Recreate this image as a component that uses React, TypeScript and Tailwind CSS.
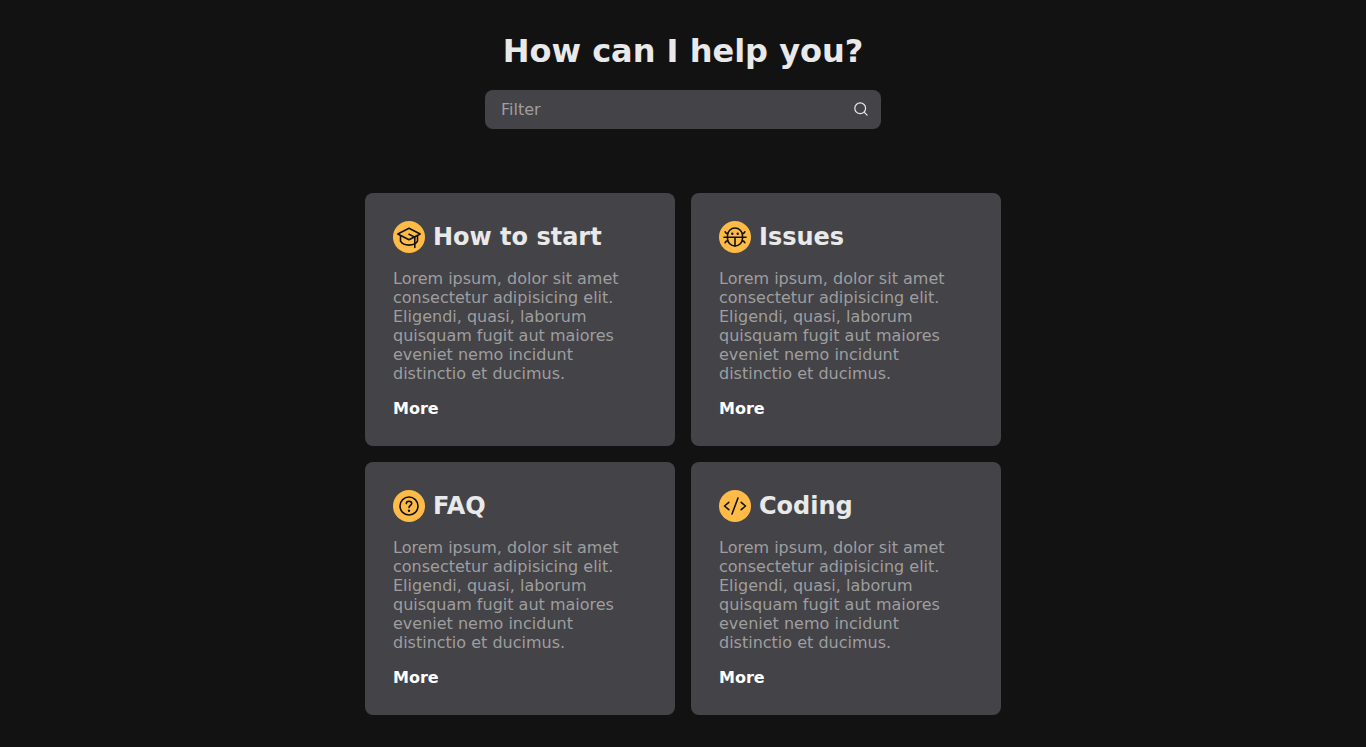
import { useState } from "react";
import type { ReactNode } from "react";

type Topic = { title: string; icon: ReactNode };

const BODY =
  "Lorem ipsum, dolor sit amet consectetur adipisicing elit. Eligendi, quasi, laborum quisquam fugit aut maiores eveniet nemo incidunt distinctio et ducimus.";

function Icon({ children }: { children: ReactNode }) {
  return (
    <svg
      viewBox="0 0 32 32"
      className="size-8 shrink-0 rounded-full bg-[#ffbb48] text-[#121212]"
      fill="none"
      stroke="currentColor"
      strokeWidth="1.6"
      strokeLinecap="round"
      strokeLinejoin="round"
      aria-hidden="true"
    >
      {children}
    </svg>
  );
}

const topics: Topic[] = [
  {
    title: "How to start",
    icon: (
      <Icon>
        <path d="M4.8 13 16 7.3 27.2 13 16 18.8Z" />
        <path d="M7.5 14.8v5.4c1.4 2.4 4.7 3.9 8.5 3.9s7.1-1.5 8.5-3.9v-5.4" />
        <path d="M16 13.3l5.8 2.8v10.4" />
      </Icon>
    ),
  },
  {
    title: "Issues",
    icon: (
      <Icon>
        <path d="M8.5 16.2v-1.7a7.5 7.5 0 0 1 15 0v3a7.5 7.5 0 0 1-15 0Z" />
        <path d="M5 16.2h22M16 16.2v8.8M8.7 12.4H7.4L6.1 10.8M23.3 12.4h1.3l1.3-1.6M8.7 20H7.4l-1.3 1.7M23.3 20h1.3l1.3 1.700" />
        <circle cx="13.3" cy="12.7" r="1.2" fill="currentColor" stroke="none" />
        <circle cx="18.7" cy="12.7" r="1.2" fill="currentColor" stroke="none" />
      </Icon>
    ),
  },
  {
    title: "FAQ",
    icon: (
      <Icon>
        <circle cx="16" cy="16" r="9" />
        <path d="M13.3 13.6c0-1.4 1.2-2.3 2.7-2.3s2.7 1 2.7 2.3c0 1.900-2.700 1.900-2.700 3.900" />
        <circle cx="16" cy="20.7" r="1.2" fill="currentColor" stroke="none" />
      </Icon>
    ),
  },
  {
    title: "Coding",
    icon: (
      <Icon>
        <path d="M9.8 12.3 5.5 16l4.3 3.7M22.2 12.3l4.3 3.7-4.3 3.7M19 8l-6 16" />
      </Icon>
    ),
  },
];

function Card({ title, icon }: Topic) {
  return (
    <article className="rounded-lg bg-[#444348] p-7">
      <div className="flex items-center gap-2">
        {icon}
        <h2 className="text-2xl leading-[29px] font-bold text-[#e9e9e9]">{title}</h2>
      </div>
      <p className="mt-4 leading-[19px] text-[#9e9e9e]">{BODY}</p>
      <a href="#" className="mt-4 block leading-[19px] font-bold text-white">
        More
      </a>
    </article>
  );
}

export default function App() {
  const [query, setQuery] = useState("");
  const shown = topics.filter((t) => t.title.toLowerCase().includes(query.toLowerCase()));

  return (
    <main className="min-h-screen bg-[#121212] px-4 py-8 font-['DejaVu_Sans',sans-serif] text-base">
      <h1 className="text-center text-[32px] leading-[38px] font-bold text-[#e9e9e9]">How can I help you?</h1>
      <label className="mx-auto mt-5 flex w-full max-w-[396px] items-center rounded-lg bg-[#444348] pr-3">
        <input
          type="text"
          aria-label="Filter"
          placeholder="Filter"
          value={query}
          onChange={(e) => setQuery(e.target.value)}
          className="min-w-0 flex-1 bg-transparent py-2.5 pl-4 leading-[19px] text-[#e9e9e9] outline-none placeholder:text-[#9e9e9e]"
        />
        <svg viewBox="0 0 16 16" className="size-4 text-[#e9e9e9]" fill="none" stroke="currentColor" strokeWidth="1.2" strokeLinecap="round" aria-hidden="true">
          <circle cx="7.2" cy="6.3" r="5.4" />
          <path d="m11.1 10.2 3 3" />
        </svg>
      </label>
      <section className="mx-auto mt-16 grid max-w-[636px] gap-4 sm:grid-cols-2">
        {shown.map((t) => (
          <Card key={t.title} {...t} />
        ))}
      </section>
    </main>
  );
}
